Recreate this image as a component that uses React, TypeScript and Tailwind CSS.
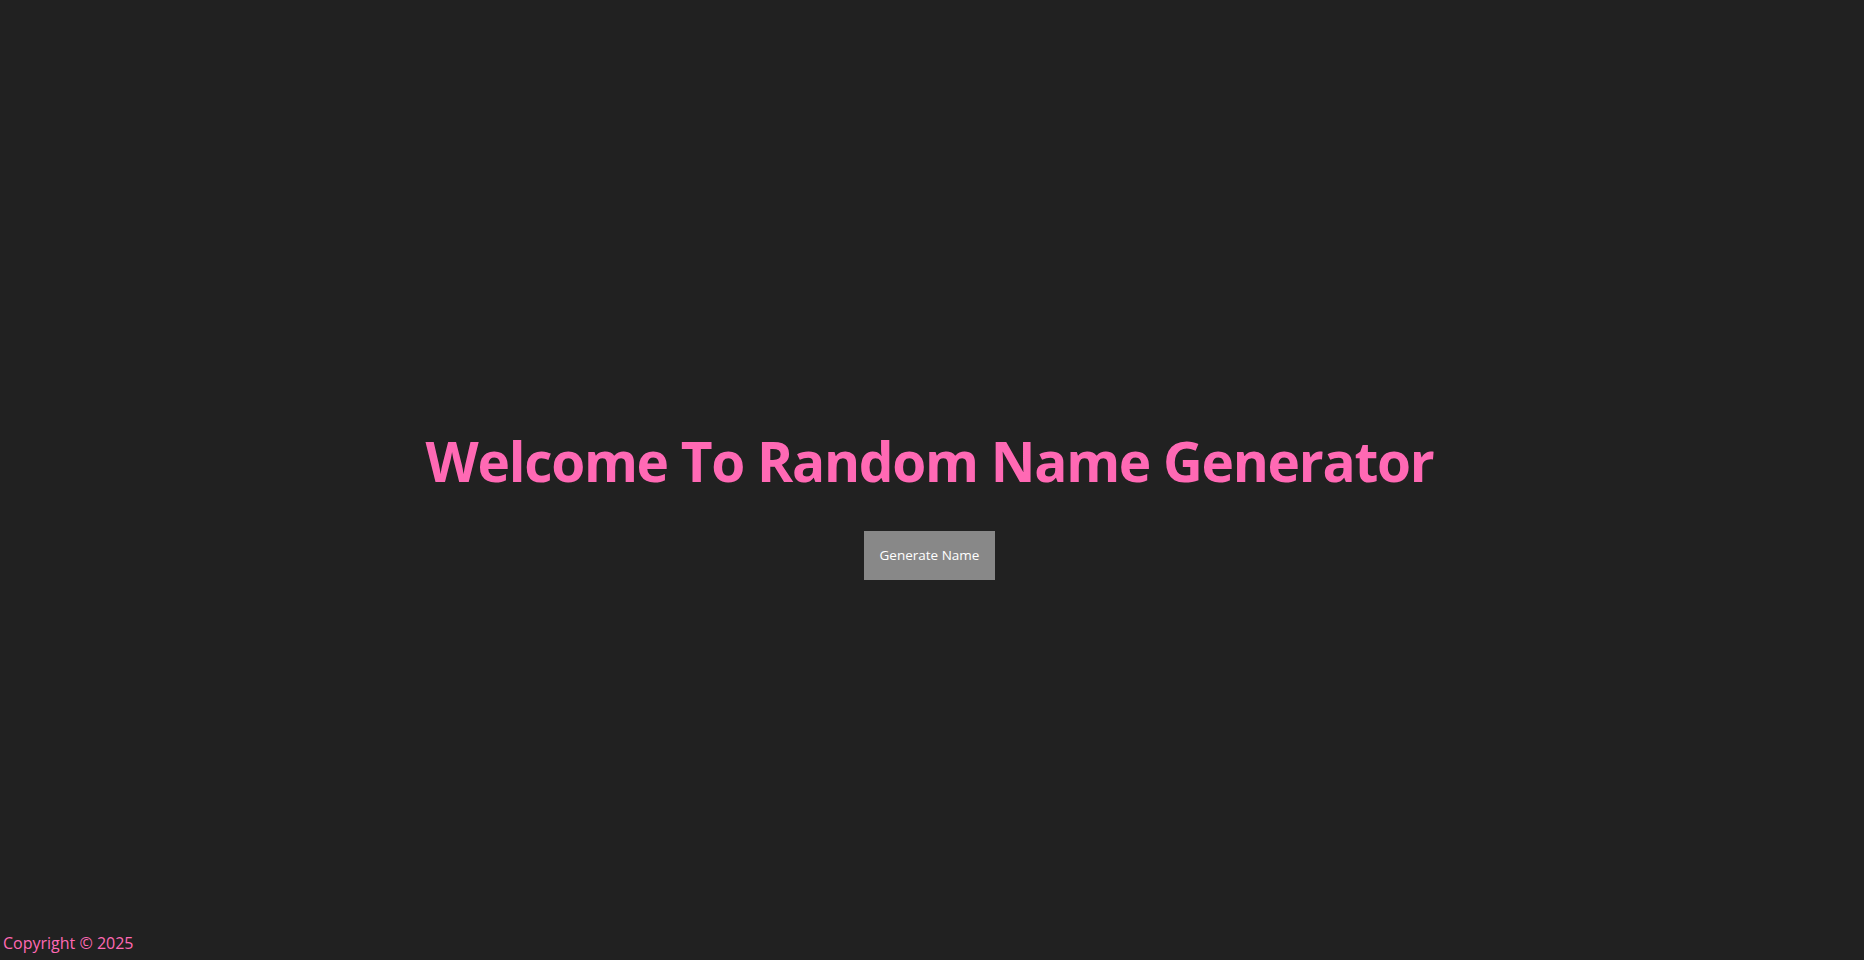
import React from "react";

export default function App() {
  return (
    <div
      className="h-screen w-full bg-[#212121] flex flex-col"
      style={{ fontFamily: '"Open Sans", "Noto Sans", sans-serif' }}
    >
      <main className="flex-1 flex flex-col items-center justify-center pt-[77px] pr-[5px]">
        <h1 className="text-[55px] leading-[1.2] tracking-[-1.3px] font-bold text-[#ff69b4]">
          Welcome To Random Name Generator
        </h1>
        <button className="mt-[37px] h-[49px] w-[131px] bg-[#888888] text-white text-[13.5px] cursor-pointer">
          Generate Name
        </button>
      </main>
      <footer className="px-[3px] pb-[5px] text-[16px] leading-[24px] text-[#ff69b4]">
        Copyright © 2025
      </footer>
    </div>
  );
}
